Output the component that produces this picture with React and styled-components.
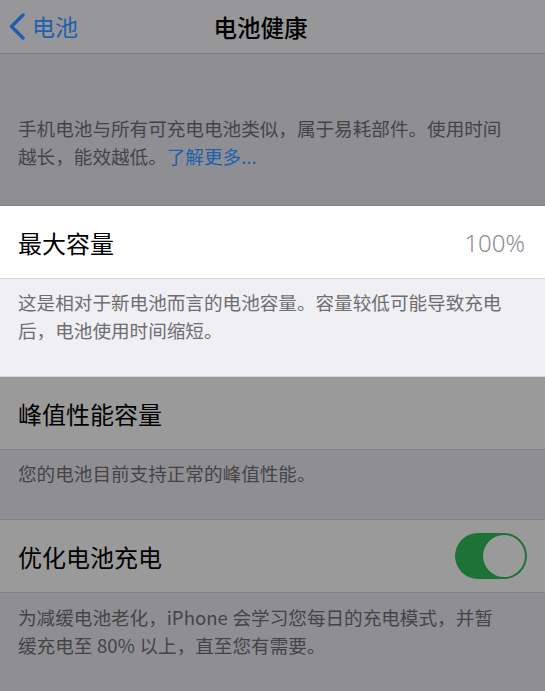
import React from "react";
import styled, { createGlobalStyle } from "styled-components";

const GlobalStyle = createGlobalStyle`
  html, body {
    margin: 0;
    padding: 0;
    background: #8f8f93;
  }
  body {
    font-family: "Noto Sans CJK SC", "Noto Sans", sans-serif;
    -webkit-font-smoothing: antialiased;
  }
`;

// colours for the lit section and for the ones under the dimming sheet
const tone = {
  cell: (dim) => (dim ? "#9a9a9b" : "#ffffff"),
  group: (dim) => (dim ? "#8f8f93" : "#efeff4"),
  line: (dim) => (dim ? "#818184" : "#d6d6da"),
  note: (dim) => (dim ? "#444446" : "#6d6d72"),
};

const Page = styled.div`
  width: 545px;
  min-height: 691px;
  overflow: hidden;
  background: #8f8f93;
`;

const NavBar = styled.header`
  height: 53px;
  display: grid;
  grid-template-columns: 1fr auto 1fr;
  align-items: center;
  padding-right: 24px;
  background: #979799;
  border-bottom: 1px solid #7d7d80;
`;

const Back = styled.div`
  display: flex;
  align-items: center;
  gap: 6px;
  padding-left: 8px;
  color: #1f5fae;
  font-size: 23px;
  line-height: 1;
`;

const Title = styled.h1`
  margin: 0;
  font-size: 23.5px;
  font-weight: 500;
  color: #000;
  letter-spacing: 0;
`;

const Note = styled.p`
  margin: 0;
  padding: ${(p) => p.$pad || "9px 18px 32px"};
  background: ${(p) => tone.group(p.$dim)};
  color: ${(p) => tone.note(p.$dim)};
  font-size: 18.6px;
  line-height: 28px;
  border-bottom: 1px solid ${(p) => tone.line(p.$dim)};
`;

const Link = styled.span`
  color: #1f5fae;
`;

const Cell = styled.div`
  height: 72px;
  display: flex;
  align-items: center;
  justify-content: space-between;
  padding: 0 20px 0 18px;
  background: ${(p) => tone.cell(p.$dim)};
  border-bottom: 1px solid ${(p) => tone.line(p.$dim)};
`;

const CellTitle = styled.span`
  font-size: 24px;
  color: #000;
`;

const Value = styled.span`
  font-family: "Noto Sans", "Liberation Sans", sans-serif;
  font-size: 24px;
  font-weight: 300;
  color: #8e8e93;
`;

const Toggle = styled.div`
  width: 72px;
  height: 46px;
  box-sizing: border-box;
  border-radius: 23px;
  background: #1d7337;
  display: flex;
  justify-content: flex-end;
  padding: 2px;
  margin-right: -2px;
`;

const Knob = styled.div`
  width: 42px;
  height: 42px;
  border-radius: 50%;
  background: #9a9a9a;
`;

export default function App() {
  return (
    <Page>
      <GlobalStyle />
      <NavBar>
        <Back>
          <svg width="18" height="27" viewBox="0 0 18 27" fill="none">
            <path d="M15 2 L3.5 13.5 L15 25" stroke="#1f5fae" strokeWidth="3.4" strokeLinecap="round" strokeLinejoin="round" />
          </svg>
          电池
        </Back>
        <Title>电池健康</Title>
        <span />
      </NavBar>

      <Note $dim $pad="60px 30px 35px 18px">
        手机电池与所有可充电电池类似，属于易耗部件。使用时间越长，能效越低。<Link>了解更多...</Link>
      </Note>

      <Cell>
        <CellTitle>最大容量</CellTitle>
        <Value>100%</Value>
      </Cell>
      <Note>这是相对于新电池而言的电池容量。容量较低可能导致充电后，电池使用时间缩短。</Note>

      <Cell $dim>
        <CellTitle>峰值性能容量</CellTitle>
      </Cell>
      <Note $dim>您的电池目前支持正常的峰值性能。</Note>

      <Cell $dim>
        <CellTitle>优化电池充电</CellTitle>
        <Toggle>
          <Knob />
        </Toggle>
      </Cell>
      <Note $dim $pad="10px 40px 32px 18px">
        为减缓电池老化，iPhone{"\u2005"}会学习您每日的充电模式，并暂缓充电至{"\u2005"}80%{"\u2005"}以上，直至您有需要。
      </Note>
    </Page>
  );
}
